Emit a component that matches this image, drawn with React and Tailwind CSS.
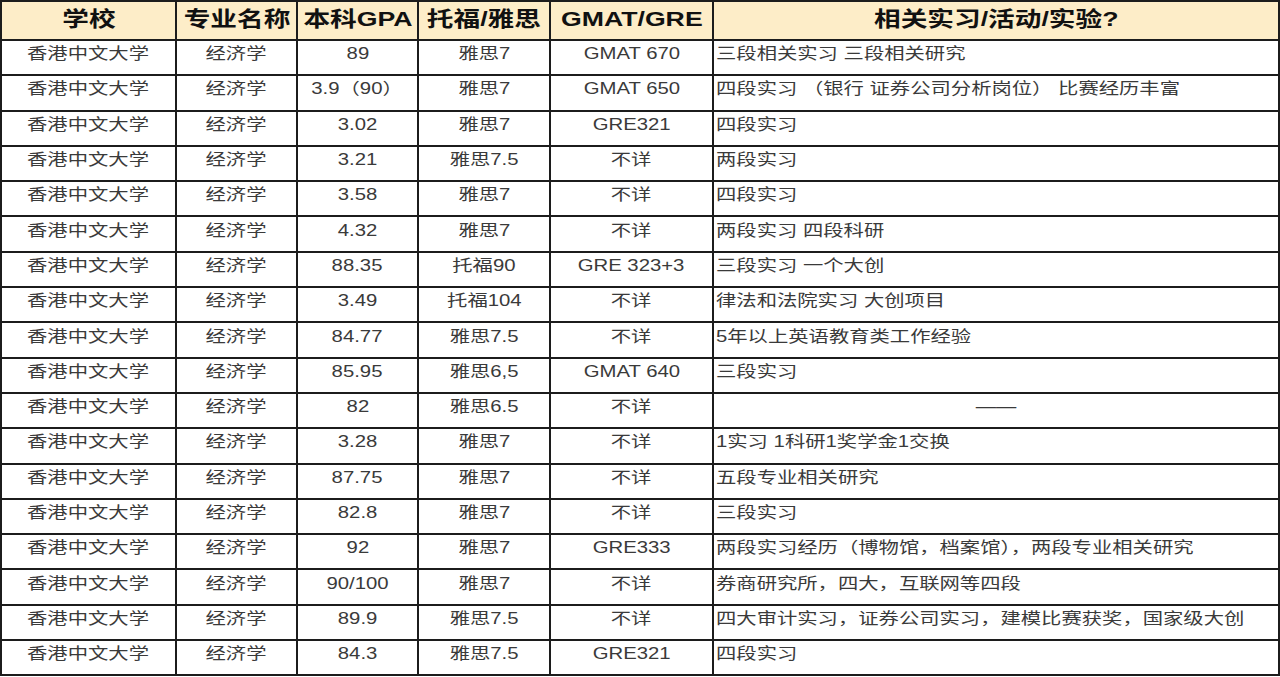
const rows = [
  ['89', '雅思7', 'GMAT 670', '三段相关实习 三段相关研究'],
  ['3.9（90）', '雅思7', 'GMAT 650', '四段实习 （银行 证券公司分析岗位） 比赛经历丰富'],
  ['3.02', '雅思7', 'GRE321', '四段实习'],
  ['3.21', '雅思7.5', '不详', '两段实习'],
  ['3.58', '雅思7', '不详', '四段实习'],
  ['4.32', '雅思7', '不详', '两段实习 四段科研'],
  ['88.35', '托福90', 'GRE 323+3', '三段实习 一个大创'],
  ['3.49', '托福104', '不详', '律法和法院实习 大创项目'],
  ['84.77', '雅思7.5', '不详', '5年以上英语教育类工作经验'],
  ['85.95', '雅思6,5', 'GMAT 640', '三段实习'],
  ['82', '雅思6.5', '不详', '——'],
  ['3.28', '雅思7', '不详', '1实习 1科研1奖学金1交换'],
  ['87.75', '雅思7', '不详', '五段专业相关研究'],
  ['82.8', '雅思7', '不详', '三段实习'],
  ['92', '雅思7', 'GRE333', '两段实习经历（博物馆，档案馆），两段专业相关研究'],
  ['90/100', '雅思7', '不详', '券商研究所，四大，互联网等四段'],
  ['89.9', '雅思7.5', '不详', '四大审计实习，证券公司实习，建模比赛获奖，国家级大创'],
  ['84.3', '雅思7.5', 'GRE321', '四段实习'],
]

const headers = ['学校', '专业名称', '本科GPA', '托福/雅思', 'GMAT/GRE', '相关实习/活动/实验?']

// the sheet text is drawn wide, so each label is stretched sideways
const Wide = ({ children, left }) => (
  <span
    className={`inline-block whitespace-nowrap scale-x-[1.27] ${left ? 'origin-left' : 'origin-center'}`}
  >
    {children}
  </span>
)

const cell = 'border-2 border-[#1c1c1c] p-0 pb-[7px] text-[16px] leading-none'

export default function App() {
  return (
    <div
      className="w-[1280px] h-[677px] bg-white overflow-hidden"
      style={{ fontFamily: '"Liberation Sans", "Noto Sans CJK SC", sans-serif' }}
    >
      <table className="table-fixed border-collapse w-[1278px] text-[#3a3a3a]">
        <colgroup>
          <col className="w-[175px]" />
          <col className="w-[121px]" />
          <col className="w-[121px]" />
          <col className="w-[132px]" />
          <col className="w-[163px]" />
          <col className="w-[566px]" />
        </colgroup>
        <thead>
          <tr className="h-[39px] bg-[#fdedc8]">
            {headers.map((h) => (
              <th
                key={h}
                className="border-2 border-[#1c1c1c] p-0 pb-[4px] text-[21px] font-bold text-[#111] text-center leading-none"
              >
                <Wide>{h}</Wide>
              </th>
            ))}
          </tr>
        </thead>
        <tbody>
          {rows.map((r, i) => (
            <tr key={i} className="h-[35.3px]">
              <td className={`${cell} text-center`}><Wide>香港中文大学</Wide></td>
              <td className={`${cell} text-center`}><Wide>经济学</Wide></td>
              <td className={`${cell} text-center`}><Wide>{r[0]}</Wide></td>
              <td className={`${cell} text-center`}><Wide>{r[1]}</Wide></td>
              <td className={`${cell} text-center`}><Wide>{r[2]}</Wide></td>
              {r[3] === '——' ? (
                <td className={`${cell} text-center`}><Wide>{r[3]}</Wide></td>
              ) : (
                <td className={`${cell} text-left pl-[2px]`}><Wide left>{r[3]}</Wide></td>
              )}
            </tr>
          ))}
        </tbody>
      </table>
    </div>
  )
}
